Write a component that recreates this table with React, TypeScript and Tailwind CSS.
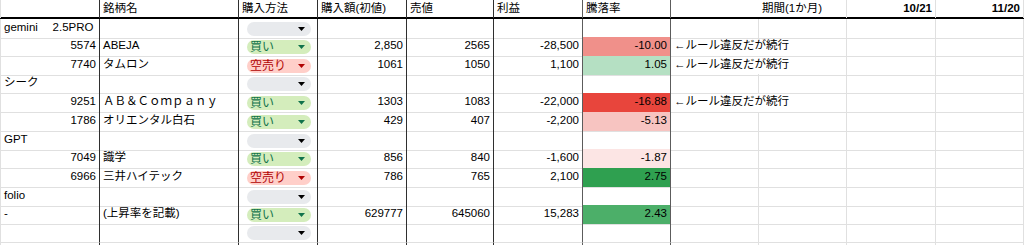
import React, { FC } from "react";

type Chip = "none" | "buy" | "short";

interface SheetRow {
  code?: string;
  codeLeft?: boolean;
  name?: string;
  chip: Chip;
  buy?: string;
  sell?: string;
  profit?: string;
  rate?: string;
  rateBg?: string;
  note?: string;
}

const gridCols =
  "grid grid-cols-[100px_139px_79px_89px_87px_89px_88px_88px_88px_89px_88px]";

// pixel heights taken from the sheet (rows are ~18.67px after scaling)
const rowHeights = [18, 19, 18, 19, 19, 19, 18, 19, 19, 18, 19, 19, 19];

const rows: SheetRow[] = [
  { code: "gemini\u3000 2.5PRO", codeLeft: true, chip: "none" },
  {
    code: "5574",
    name: "ABEJA",
    chip: "buy",
    buy: "2,850",
    sell: "2565",
    profit: "-28,500",
    rate: "-10.00",
    rateBg: "bg-[#f0908a]",
    note: "←ルール違反だが続行",
  },
  {
    code: "7740",
    name: "タムロン",
    chip: "short",
    buy: "1061",
    sell: "1050",
    profit: "1,100",
    rate: "1.05",
    rateBg: "bg-[#b5e0c3]",
    note: "←ルール違反だが続行",
  },
  { code: "シーク", codeLeft: true, chip: "none" },
  {
    code: "9251",
    name: "ＡＢ＆Ｃｏｍｐａｎｙ",
    chip: "buy",
    buy: "1303",
    sell: "1083",
    profit: "-22,000",
    rate: "-16.88",
    rateBg: "bg-[#e8453c]",
    note: "←ルール違反だが続行",
  },
  {
    code: "1786",
    name: "オリエンタル白石",
    chip: "buy",
    buy: "429",
    sell: "407",
    profit: "-2,200",
    rate: "-5.13",
    rateBg: "bg-[#f7c4c1]",
  },
  { code: "GPT", codeLeft: true, chip: "none" },
  {
    code: "7049",
    name: "識学",
    chip: "buy",
    buy: "856",
    sell: "840",
    profit: "-1,600",
    rate: "-1.87",
    rateBg: "bg-[#fce5e4]",
  },
  {
    code: "6966",
    name: "三井ハイテック",
    chip: "short",
    buy: "786",
    sell: "765",
    profit: "2,100",
    rate: "2.75",
    rateBg: "bg-[#2fa050]",
  },
  { code: "folio", codeLeft: true, chip: "none" },
  {
    code: "-",
    codeLeft: true,
    name: "(上昇率を記載)",
    chip: "buy",
    buy: "629777",
    sell: "645060",
    profit: "15,283",
    rate: "2.43",
    rateBg: "bg-[#4caf69]",
  },
  { chip: "none" },
  { chip: "none" },
];

const darkLine = "border-r border-r-[#2f2f2f]";
const greyLine = "border-r border-r-[#5c5c5c]";
const lightLine = "border-r border-r-[#e0e0e0]";

const Arrow: FC<{ color: string }> = ({ color }) => (
  <svg width="7" height="4" viewBox="0 0 7 4">
    <path d="M0 0h7L3.5 4z" fill={color} />
  </svg>
);

const DropdownChip: FC<{ kind: Chip }> = ({ kind }) => {
  const styles = {
    none: { bg: "bg-[#e8eaed]", text: "text-black", arrow: "#000000", label: "" },
    buy: { bg: "bg-[#d4edbc]", text: "text-[#11734b]", arrow: "#11734b", label: "買い" },
    short: { bg: "bg-[#ffcfc9]", text: "text-[#b10202]", arrow: "#b10202", label: "空売り" },
  }[kind];

  return (
    <div
      className={`ml-[8px] flex h-[14px] w-[64px] items-center justify-between rounded-full pl-[3px] pr-[6px] text-[12px] leading-none ${styles.bg} ${styles.text}`}
    >
      <span>{styles.label}</span>
      <Arrow color={styles.arrow} />
    </div>
  );
};

const Cell: FC<{
  line: string;
  right?: boolean;
  className?: string;
  children?: React.ReactNode;
}> = ({ line, right, className = "", children }) => (
  <div
    className={`flex items-end whitespace-nowrap border-b border-b-[#e0e0e0] px-[3px] pb-[2px] ${line} ${
      right ? "justify-end" : "justify-start"
    } ${className}`}
  >
    {children}
  </div>
);

export default function App() {
  return (
    <div className="h-[245px] w-[1024px] overflow-hidden bg-white font-['Liberation_Sans','Noto_Sans_CJK_JP',sans-serif] text-[11.5px] text-black">
      {/* header */}
      <div className={`${gridCols} h-[19px] border-b-2 border-b-black`}>
        <div className={`border-l border-l-[#e0e0e0] ${darkLine}`} />
        <div className={`flex items-end px-[3px] pb-[1px] ${darkLine}`}>銘柄名</div>
        <div className={`flex items-end px-[3px] pb-[1px] ${darkLine}`}>購入方法</div>
        <div className={`flex items-end px-[3px] pb-[1px] ${darkLine}`}>購入額(初値)</div>
        <div className={`flex items-end px-[3px] pb-[1px] ${darkLine}`}>売値</div>
        <div className={`flex items-end px-[3px] pb-[1px] ${greyLine}`}>利益</div>
        <div className={`flex items-end px-[3px] pb-[1px] ${greyLine}`}>騰落率</div>
        <div />
        <div className={`flex items-end px-[3px] pb-[1px] ${lightLine}`}>期間(1か月)</div>
        <div className={`flex items-end justify-end px-[3px] pb-[1px] font-bold ${lightLine}`}>
          10/21
        </div>
        <div className={`flex items-end justify-end px-[3px] pb-[1px] font-bold ${lightLine}`}>
          11/20
        </div>
      </div>

      {rows.map((row, i) => (
        <div
          key={i}
          className={gridCols}
          style={{ height: rowHeights[i] }}
        >
          <Cell line={`border-l border-l-[#e0e0e0] ${darkLine}`} right={!row.codeLeft}>
            {row.code}
          </Cell>
          <Cell line={darkLine}>{row.name}</Cell>
          <div className={`flex items-center border-b border-b-[#e0e0e0] ${darkLine}`}>
            <DropdownChip kind={row.chip} />
          </div>
          <Cell line={darkLine} right>
            {row.buy}
          </Cell>
          <Cell line={darkLine} right>
            {row.sell}
          </Cell>
          <Cell line={greyLine} right>
            {row.profit}
          </Cell>
          <Cell line={greyLine} right className={row.rateBg ?? ""}>
            {row.rate}
          </Cell>
          <Cell line={row.note ? "" : lightLine}>{row.note}</Cell>
          <Cell line={lightLine} />
          <Cell line={lightLine} />
          <Cell line={lightLine} />
        </div>
      ))}
    </div>
  );
}
